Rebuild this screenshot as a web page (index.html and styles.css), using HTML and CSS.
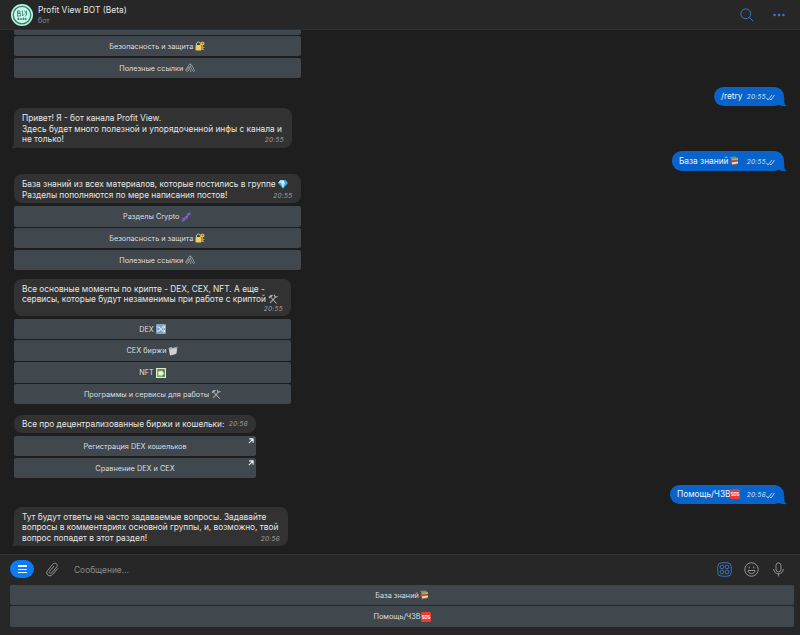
FILE: index.html
```html
<!DOCTYPE html>
<html lang="ru">
<head>
  <meta charset="UTF-8">
  <meta name="viewport" content="width=device-width, initial-scale=1.0">
  <title>Profit View BOT (Beta)</title>
  <link rel="stylesheet" href="styles.css">
</head>
<body>
  <!-- icons used in messages and buttons -->
  <svg class="sprite" aria-hidden="true">
    <symbol id="lock" viewBox="0 0 20 20">
      <path d="M3 9V6a4 4 0 0 1 8 0v3" fill="none" stroke="#c9b98a" stroke-width="2"/>
      <rect x="1" y="8" width="12" height="11" rx="2" fill="#e9ce6c"/>
      <circle cx="15" cy="5" r="4" fill="#e2b431"/>
      <circle cx="15" cy="4" r="1.2" fill="#5b4a1c"/>
      <path d="M15 8v10M15 13h4M15 17h3" stroke="#c99a20" stroke-width="2.4"/>
    </symbol>
    <symbol id="clips" viewBox="0 0 20 20">
      <path d="M1 15L8 3.500c1.500-2 4.500-.5 3.500 2L6 16c-1.500 2-4 .5-3-1.500L8 7M9 3c2-2 3.500-.5 4.500 1.500L19 15c.5 2-2 3-3 1L10 6M12 18L9 11" fill="none" stroke="#b4bac0" stroke-width="1.3"/>
    </symbol>
    <symbol id="gem" viewBox="0 0 20 20">
      <path d="M5 2h10l5 6-10 11L0 8z" fill="#38a9e4"/>
      <path d="M5 2L0 8h6l4-6zM6 8l4 11 4-11z" fill="#a7e4fa"/>
      <path d="M10 2L6 8h8z" fill="#e2f7ff"/>
    </symbol>
    <symbol id="dna" viewBox="0 0 20 20">
      <path d="M1 18c7 1 4-7 9-8s3-8 9-8" fill="none" stroke="#7861d8" stroke-width="3"/>
      <path d="M1 13c4-3 7 5 10 1s-1-9 5-11l3 3" fill="none" stroke="#8a50c0" stroke-width="2.2"/>
      <path d="M5 13l2 4M10 8l4 3M13 3l4 3" stroke="#5aa0df" stroke-width="1.3"/>
    </symbol>
    <symbol id="tools" viewBox="0 0 20 20">
      <path d="M4 18L15 6" stroke="#9a958f" stroke-width="2.400"/>
      <path d="M13 1.500c-1 4 1.500 6 6 3.500M7 8l10 11" fill="none" stroke="#bdc2c6" stroke-width="2"/>
      <path d="M1 6l4-4 6 0-3 2-1 4-2-1-2 2z" fill="#a9aeb2"/>
    </symbol>
    <symbol id="shuffle" viewBox="0 0 20 20">
      <rect width="20" height="20" rx="2" fill="#7fa6c6"/>
      <path d="M2 6h4l7 8h5M2 14h4l7-8h5M15 3l3 3-3 3M15 11l3 3-3 3" fill="none" stroke="#eef5fa" stroke-width="1.8"/>
    </symbol>
    <symbol id="cards" viewBox="0 0 20 20">
      <path d="M1 4l6-2 2 2 10-3-2 14-13 3z" fill="#b0b4b7"/>
      <path d="M3 8l15-4-2 12-12 3z" fill="#cfd2d4"/>
      <path d="M14 2h4v4z" fill="#8b9094"/>
    </symbol>
    <symbol id="picture" viewBox="0 0 20 20">
      <rect width="20" height="20" fill="#dfe9d2"/>
      <rect x="2.5" y="2.5" width="15" height="15" fill="#3d6f3f"/>
      <path d="M3 5h11l3 7-5 5H3z" fill="#8fce74"/>
      <path d="M5 8l7-2 3 5-5 4-5-2z" fill="#f2f7dc"/>
    </symbol>
    <symbol id="books" viewBox="0 0 20 20">
      <path d="M2 2l11-1 5 4-13 2z" fill="#58a255"/>
      <path d="M5 6l13-2v4L6 10z" fill="#c9a45b"/>
      <path d="M2 9l13-1 3 4-13 2z" fill="#c4493d"/>
      <path d="M5 13l13-2v4L7 18z" fill="#e3dcc9"/>
      <path d="M4 14l2 5 11-2v-2L7 17z" fill="#94603a"/>
    </symbol>
    <symbol id="sos" viewBox="0 0 20 20">
      <rect width="20" height="20" rx="3" fill="#ee3b2e"/>
      <path d="M6 7H2.500v3H6v3H2.500M17.500 7H14v3h3.500v3H14" fill="none" stroke="#fff" stroke-width="1.5"/>
      <rect x="8" y="7" width="4" height="6" fill="none" stroke="#fff" stroke-width="1.5"/>
    </symbol>
    <symbol id="checks" viewBox="0 0 18 14">
      <path d="M1 8l3 4 8-10M8 10l2 2 7-10" fill="none" stroke="#d5e6fa" stroke-width="1.6"/>
    </symbol>
    <symbol id="link" viewBox="0 0 10 10">
      <path d="M2 1.500h6.500V8M8 2L1.500 8.500" fill="none" stroke="#f2f4f5" stroke-width="1.8"/>
    </symbol>
    <symbol id="tail" viewBox="0 0 10 10">
      <path d="M3 0v4c0 3-1 4-3 5 4 .5 7 0 10-2V0z" fill="currentColor"/>
    </symbol>
  </svg>

  <div class="app">
    <header class="header">
      <svg class="avatar" viewBox="0 0 44 44">
        <circle cx="22" cy="22" r="22" fill="#b9f3df"/>
        <circle cx="22" cy="22" r="17.500" fill="#c9f7e7" stroke="#2f7d6c" stroke-width="2.500"/>
        <path d="M13 13v12M13 14h5v4h-5M13 19h6v5h-6M23 13v11l4-4M31 13v9l-3 3M27 13l4 8M12 30h20M15 27v5M20 28v4M25 27v5M29 28v4" fill="none" stroke="#367f70" stroke-width="1.600"/>
      </svg>
      <div class="peer">
        <div class="peer-name">Profit View BOT (Beta)</div>
        <div class="peer-status">бот</div>
      </div>
      <svg class="search" viewBox="0 0 14 14"><circle cx="5.800" cy="5.800" r="4.900"/><path d="M9.400 9.400l3.800 3.800"/></svg>
      <svg class="more" viewBox="0 0 12 4"><circle cx="1.600" cy="2" r="1.300"/><circle cx="6" cy="2" r="1.300"/><circle cx="10.400" cy="2" r="1.300"/></svg>
    </header>

    <main class="chat">
      <div class="buttons w-base">
        <div class="btn"></div>
        <div class="btn"><span>Безопасность и защита</span><svg class="emoji"><use href="#lock"/></svg></div>
        <div class="btn"><span>Полезные ссылки</span><svg class="emoji"><use href="#clips"/></svg></div>
      </div>

      <div class="bubble out retry">
        <span>/retry</span><span class="time">20:55</span><svg class="checks"><use href="#checks"/></svg>
        <svg class="tail"><use href="#tail"/></svg>
      </div>

      <div class="bubble in hello">
        <div class="line">Привет! Я - бот канала Profit View.</div>
        <div class="line">Здесь будет много полезной и упорядоченной инфы с канала и</div>
        <div class="line last">не только!<span class="time">20:55</span></div>
        <svg class="tail"><use href="#tail"/></svg>
      </div>

      <div class="bubble out base">
        <span>База знаний</span><svg class="emoji"><use href="#books"/></svg><span class="time">20:55</span><svg class="checks"><use href="#checks"/></svg>
        <svg class="tail"><use href="#tail"/></svg>
      </div>

      <div class="bubble in w-base about">
        <div class="line">База знаний из всех материалов, которые постились в группе <svg class="emoji"><use href="#gem"/></svg></div>
        <div class="line last">Разделы пополняются по мере написания постов!<span class="time">20:55</span></div>
      </div>
      <div class="buttons w-base">
        <div class="btn"><span>Разделы Crypto</span><svg class="emoji"><use href="#dna"/></svg></div>
        <div class="btn"><span>Безопасность и защита</span><svg class="emoji"><use href="#lock"/></svg></div>
        <div class="btn"><span>Полезные ссылки</span><svg class="emoji"><use href="#clips"/></svg></div>
      </div>

      <div class="bubble in w-crypto crypto">
        <div class="line">Все основные моменты по крипте - DEX, CEX, NFT. А еще -</div>
        <div class="line">сервисы, которые будут незаменимы при работе с криптой <svg class="emoji"><use href="#tools"/></svg></div>
        <div class="line last"><span class="time">20:55</span></div>
      </div>
      <div class="buttons w-crypto">
        <div class="btn"><span>DEX</span><svg class="emoji"><use href="#shuffle"/></svg></div>
        <div class="btn"><span>CEX биржи</span><svg class="emoji"><use href="#cards"/></svg></div>
        <div class="btn"><span>NFT</span><svg class="emoji"><use href="#picture"/></svg></div>
        <div class="btn"><span>Программы и сервисы для работы</span><svg class="emoji"><use href="#tools"/></svg></div>
      </div>

      <div class="bubble in w-dex dex">
        <div class="line last">Все про децентрализованные биржи и кошельки:<span class="time">20:56</span></div>
      </div>
      <div class="buttons w-dex">
        <div class="btn"><span>Регистрация DEX кошельков</span><svg class="link"><use href="#link"/></svg></div>
        <div class="btn"><span>Сравнение DEX и CEX</span><svg class="link"><use href="#link"/></svg></div>
      </div>

      <div class="bubble out help">
        <span>Помощь/ЧЗВ</span><svg class="emoji"><use href="#sos"/></svg><span class="time">20:56</span><svg class="checks"><use href="#checks"/></svg>
        <svg class="tail"><use href="#tail"/></svg>
      </div>

      <div class="bubble in faq">
        <div class="line">Тут будут ответы на часто задаваемые вопросы. Задавайте</div>
        <div class="line">вопросы в комментариях основной группы, и, возможно, твой</div>
        <div class="line last">вопрос попадет в этот раздел!<span class="time">20:56</span></div>
        <svg class="tail"><use href="#tail"/></svg>
      </div>
    </main>

    <footer class="footer">
      <div class="composer">
        <div class="menu"><i></i><i></i><i></i></div>
        <svg class="icon clip" viewBox="0 0 14 16"><path d="M12.600 6.800L7.200 13.200c-1.500 1.800-3.700 2-5.200.8s-1.600-3.400-.2-5L7.500 2.200c1-1.200 2.600-1.300 3.700-.4s1.200 2.400.2 3.600l-5.300 6.300c-.6.700-1.500.8-2.100.3s-.7-1.400-.1-2.100l4.700-5.500"/></svg>
        <div class="placeholder">Сообщение...</div>
        <svg class="icon keys" viewBox="0 0 16 16"><rect x=".8" y=".8" width="14.400" height="14.400" rx="4.200"/><circle cx="5.300" cy="5.300" r="2"/><circle cx="10.700" cy="5.300" r="2"/><circle cx="5.300" cy="10.700" r="2"/><circle cx="10.700" cy="10.700" r="2"/></svg>
        <svg class="icon smile" viewBox="0 0 16 16"><circle cx="8" cy="8" r="7.200"/><path d="M5.600 4.800v2M10.400 4.800v2M4.300 9h7.400c-.3 2.200-1.700 3.400-3.700 3.400S4.600 11.200 4.300 9z"/></svg>
        <svg class="icon mic" viewBox="0 0 12 16"><rect x="3.300" y=".8" width="5.400" height="9.800" rx="2.700"/><path d="M.8 7.500c0 3.300 2.200 5.200 5.200 5.200s5.200-1.900 5.200-5.200M6 12.700v2.800"/></svg>
      </div>
      <div class="buttons keyboard">
        <div class="btn"><span>База знаний</span><svg class="emoji"><use href="#books"/></svg></div>
        <div class="btn"><span>Помощь/ЧЗВ</span><svg class="emoji"><use href="#sos"/></svg></div>
      </div>
    </footer>
  </div>
</body>
</html>
```
FILE: styles.css
```css
body {
  margin: 0;
  background-color: #1e1e1e;
  color: #e6e6e6;
  font-family: Inter, "Liberation Sans", sans-serif;
  font-size: 8.3px;
}

.sprite {
  display: none;
}

.app {
  display: flex;
  flex-direction: column;
  height: 635px;
  overflow: hidden;
}

/* header */
.header {
  display: flex;
  align-items: center;
  box-sizing: border-box;
  height: 30px;
  padding: 0 15px 0 11px;
  background-color: #272727;
  border-bottom: 1px solid #303030;
}

.avatar {
  width: 22px;
  height: 22px;
  margin-right: 5px;
}

.peer {
  flex: 1;
  padding-top: 1px;
}

.peer-name {
  font-size: 8.4px;
  line-height: 11px;
}

.peer-status {
  font-size: 7px;
  line-height: 9px;
  color: #8a8a8a;
}

.search {
  width: 14px;
  height: 14px;
  margin-right: 19px;
  fill: none;
  stroke: #3c76c4;
  stroke-width: 1;
}

.more {
  width: 12px;
  height: 4px;
  fill: #3c76c4;
}

/* messages */
.chat {
  display: flex;
  flex: 1;
  flex-direction: column;
  justify-content: flex-end;
  align-items: flex-start;
  min-height: 0;
  padding: 0 16px 8px 14px;
  overflow: hidden;
}

.bubble {
  position: relative;
  box-sizing: border-box;
  flex-shrink: 0;
  border-radius: 8px;
  white-space: nowrap;
}

.in {
  padding: 5px 8px 3.5px;
  background-color: #323232;
  color: #e6e6e6;
}

.line {
  height: 10.4px;
  line-height: 10.4px;
}

.last {
  display: flex;
  justify-content: space-between;
}

.time {
  margin-left: auto;
  font-size: 6.4px;
  font-style: italic;
  letter-spacing: 0.35px;
  color: #a2a2a2;
}

.last .time {
  padding-top: 1px;
}

.out {
  display: flex;
  align-self: flex-end;
  align-items: center;
  height: 19.5px;
  padding: 0 9px 0 7px;
  border-radius: 9.5px;
  background-color: #0864cc;
  color: #eef5fd;
}

.out .time {
  padding-top: 2px;
  color: #d5e6fa;
}

.checks {
  width: 9px;
  height: 7px;
  margin-top: 3px;
}

.tail {
  position: absolute;
  bottom: -1px;
  left: -3px;
  width: 9px;
  height: 9px;
  color: #323232;
}

.out .tail {
  right: -3px;
  left: auto;
  color: #0864cc;
  transform: scaleX(-1);
}

.emoji {
  flex-shrink: 0;
  width: 10px;
  height: 10px;
  vertical-align: -2px;
}

.w-base {
  width: 286.5px;
}

.w-crypto {
  width: 277px;
}

.w-dex {
  width: 242px;
}

.retry {
  width: 70px;
  height: 18.5px;
  margin-top: 9px;
}

.hello {
  width: 278px;
  height: 40px;
  margin-top: 2.5px;
}

.base {
  width: 112px;
  margin-top: 3px;
}

.about {
  height: 29px;
  margin-top: 3.5px;
}

.crypto {
  height: 37px;
  margin-top: 8.3px;
}

.crypto .time {
  padding-top: 0;
}

.dex {
  height: 17.5px;
  margin-top: 11px;
  padding-top: 4px;
}

.dex .time {
  padding-top: 0;
}

.help {
  width: 114px;
  margin-top: 6.5px;
}

.faq {
  width: 274px;
  height: 39px;
  margin-top: 3px;
}

/* inline keyboards */
.buttons {
  display: flex;
  flex-direction: column;
  flex-shrink: 0;
  gap: 1.25px;
}

.bubble + .buttons {
  margin-top: 3px;
}

.btn {
  position: relative;
  display: flex;
  justify-content: center;
  align-items: center;
  gap: 2px;
  box-sizing: border-box;
  height: 20.5px;
  padding-top: 0.5px;
  border-radius: 2px;
  background-color: #40474d;
  color: #dcdfe1;
  font-size: 7.3px;
}

.link {
  position: absolute;
  top: 2px;
  right: 2px;
  width: 6px;
  height: 6px;
}

/* bottom bar */
.footer {
  box-sizing: border-box;
  height: 81px;
  padding: 0 6px 0 10px;
  background-color: #272727;
  border-top: 1px solid #323232;
}

.composer {
  display: flex;
  align-items: center;
  box-sizing: border-box;
  height: 29.5px;
  padding: 0 10px 1px 0;
}

.menu {
  display: flex;
  flex-direction: column;
  justify-content: center;
  align-items: center;
  gap: 2px;
  width: 24px;
  height: 18px;
  border-radius: 9px;
  background-color: #0a7cf5;
}

.menu i {
  width: 9px;
  height: 1.3px;
  background-color: #fff;
}

.icon {
  height: 15px;
  fill: none;
  stroke: #9b9b9b;
  stroke-width: 1;
}

.clip {
  width: 13px;
  margin-left: 12px;
}

.placeholder {
  flex: 1;
  margin-left: 15px;
  padding-top: 1px;
  font-size: 8.4px;
  color: #8b8b8b;
}

.keys {
  width: 15px;
  stroke: #3c76c4;
}

.smile {
  width: 15px;
  margin-left: 12px;
}

.mic {
  width: 11px;
  margin-left: 14px;
}

.keyboard .btn {
  gap: 0;
}
```
